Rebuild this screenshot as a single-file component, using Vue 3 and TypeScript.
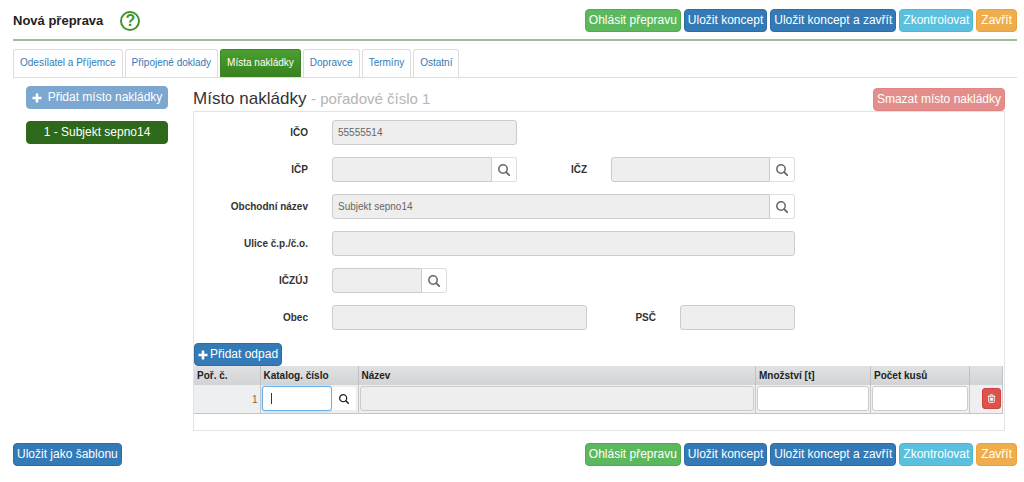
<script setup lang="ts">
import { ref } from 'vue'

interface Action { label: string; kind: string }

const actions: Action[] = [
  { label: 'Ohlásit přepravu', kind: 'success' },
  { label: 'Uložit koncept', kind: 'primary' },
  { label: 'Uložit koncept a zavřít', kind: 'primary' },
  { label: 'Zkontrolovat', kind: 'info' },
  { label: 'Zavřít', kind: 'warning' },
]
const tabs: string[] = ['Odesílatel a Příjemce', 'Připojené doklady', 'Místa nakládky', 'Dopravce', 'Termíny', 'Ostatní']
const activeTab = ref('Místa nakládky')
const ico = ref('55555514')
const companyName = ref('Subjekt sepno14')
const catalogNumber = ref('')
const quantity = ref('')
const pieces = ref('')
</script>

<template>
  <div class="page">
    <svg class="defs" aria-hidden="true">
      <symbol id="i-search" viewBox="0 0 12 12">
        <circle cx="5" cy="5" r="4.2" fill="none" stroke="currentColor" stroke-width="1.5" />
        <path d="M8.2 8.2l3 3" stroke="currentColor" stroke-width="1.8" stroke-linecap="round" />
      </symbol>
      <symbol id="i-plus" viewBox="0 0 10 10">
        <path d="M5 .5v9M.5 5h9" stroke="currentColor" stroke-width="2.6" />
      </symbol>
      <symbol id="i-trash" viewBox="0 0 10 10">
        <path d="M.8 2.5h8.4M3.2 2.3l.6-1.5h2.4l.6 1.5M1.9 2.7v5.7q0 .9.9.9h4.4q.9 0 .9-.9V2.7M3.9 4.2v3.4M5 4.2v3.4M6.1 4.2v3.4" fill="none" stroke="currentColor" stroke-width="1" />
      </symbol>
    </svg>

    <header class="top">
      <h1>Nová přeprava</h1>
      <button type="button" class="help" aria-label="Nápověda">?</button>
      <div class="actions">
        <button v-for="a in actions" :key="a.label" type="button" class="btn" :class="a.kind">{{ a.label }}</button>
      </div>
    </header>

    <nav class="tabs">
      <a v-for="t in tabs" :key="t" href="#" :class="{ active: t === activeTab }" @click.prevent="activeTab = t">{{ t }}</a>
    </nav>

    <div class="body">
      <aside class="side">
        <button type="button" class="btn add"><svg class="plus"><use href="#i-plus" /></svg>Přidat místo nakládky</button>
        <button type="button" class="btn place">1 - Subjekt sepno14</button>
      </aside>

      <main class="content">
        <div class="heading">
          <h2>Místo nakládky <small>- pořadové číslo 1</small></h2>
          <button type="button" class="btn remove">Smazat místo nakládky</button>
        </div>

        <section class="panel">
          <form class="form" @submit.prevent>
            <div class="row">
              <label for="ico">IČO</label>
              <input id="ico" class="field" :value="ico" readonly />
            </div>
            <div class="row">
              <label for="icp">IČP</label>
              <div class="group">
                <input id="icp" class="field" readonly />
                <button type="button" class="find" aria-label="Hledat IČP"><svg><use href="#i-search" /></svg></button>
              </div>
              <label for="icz">IČZ</label>
              <div class="group">
                <input id="icz" class="field" readonly />
                <button type="button" class="find" aria-label="Hledat IČZ"><svg><use href="#i-search" /></svg></button>
              </div>
            </div>
            <div class="row">
              <label for="company">Obchodní název</label>
              <div class="group wide">
                <input id="company" class="field" :value="companyName" readonly />
                <button type="button" class="find" aria-label="Hledat subjekt"><svg><use href="#i-search" /></svg></button>
              </div>
            </div>
            <div class="row">
              <label for="street">Ulice č.p./č.o.</label>
              <input id="street" class="field wide" readonly />
            </div>
            <div class="row">
              <label for="iczuj">IČZÚJ</label>
              <div class="group short">
                <input id="iczuj" class="field" readonly />
                <button type="button" class="find" aria-label="Hledat IČZÚJ"><svg><use href="#i-search" /></svg></button>
              </div>
            </div>
            <div class="row town">
              <label for="city">Obec</label>
              <input id="city" class="field" readonly />
              <label for="zip">PSČ</label>
              <input id="zip" class="field" readonly />
            </div>
          </form>

          <button type="button" class="btn primary waste"><svg class="plus"><use href="#i-plus" /></svg>Přidat odpad</button>
          <table>
            <colgroup><col class="c-no" /><col class="c-cat" /><col /><col class="c-qty" /><col class="c-pcs" /><col class="c-del" /></colgroup>
            <thead>
              <tr><th>Poř. č.</th><th>Katalog. číslo</th><th>Název</th><th>Množství [t]</th><th>Počet kusů</th><th></th></tr>
            </thead>
            <tbody>
              <tr>
                <td class="num">1</td>
                <td>
                  <div class="group catalog">
                    <input v-model="catalogNumber" class="field focused" aria-label="Katalog. číslo" />
                    <span v-if="!catalogNumber" class="caret"></span>
                    <button type="button" class="find" aria-label="Hledat katalogové číslo"><svg><use href="#i-search" /></svg></button>
                  </div>
                </td>
                <td><input class="field" readonly aria-label="Název" /></td>
                <td><input v-model="quantity" class="field" aria-label="Množství [t]" /></td>
                <td><input v-model="pieces" class="field" aria-label="Počet kusů" /></td>
                <td class="del"><button type="button" class="trash" aria-label="Smazat odpad"><svg><use href="#i-trash" /></svg></button></td>
              </tr>
            </tbody>
          </table>
        </section>
      </main>
    </div>

    <footer class="bottom">
      <button type="button" class="btn primary">Uložit jako šablonu</button>
      <div class="actions">
        <button v-for="a in actions" :key="a.label" type="button" class="btn" :class="a.kind">{{ a.label }}</button>
      </div>
    </footer>
  </div>
</template>

<style>
body { margin: 0; background: #fff; }
</style>

<style scoped>
.page { padding: 0 7px 16px 13px; font-family: "Liberation Sans", Arial, sans-serif; font-size: 10px; color: #333; }
.page * { box-sizing: border-box; }
.defs { position: absolute; width: 0; height: 0; }
button, input { font: inherit; margin: 0; }
button { cursor: pointer; }
svg { display: block; fill: none; }

.top { display: flex; align-items: center; padding: 9px 0 7px; border-bottom: 2px solid #9cc096; }
h1 { margin: 0 17px 0 0; padding-top: 1px; font-size: 13px; line-height: 22px; color: #222; }
.help { width: 20px; height: 20px; padding: 0; border: 2px solid #43932b; border-radius: 50%; background: #fff; color: #43932b; font-size: 16px; font-weight: bold; line-height: 16px; }
.actions { display: flex; gap: 3px; margin-left: auto; }

.btn { height: 23px; padding: 0 3px; border: 1px solid transparent; border-radius: 4px; color: #fff; font-size: 12px; line-height: 21px; white-space: nowrap; display: flex; align-items: center; justify-content: center; }
.success { background: #5cb85c; border-color: #4cae4c; }
.primary { background: #337ab7; border-color: #2e6da4; }
.info { background: #5bc0de; border-color: #46b8da; }
.warning { padding: 0 4px; background: #f0ad4e; border-color: #eea236; }
.plus { width: 10px; height: 10px; }

.tabs { display: flex; gap: 2px; margin-top: 8px; border-bottom: 1px solid #ddd; }
.tabs a { height: 28px; padding: 0 6px; border: 1px solid #ddd; border-bottom: 0; border-radius: 3px 3px 0 0; color: #337ab7; line-height: 26px; text-decoration: none; white-space: nowrap; }
.tabs a.active { border-color: #3b8524; background: linear-gradient(#4ba02f, #38801f); color: #fff; }

.body { display: grid; grid-template-columns: 180px minmax(0, 1fr); padding-right: 12px; }
.side { display: flex; flex-direction: column; gap: 12px; padding: 8px 25px 0 13px; }
.add { gap: 6px; background: #7ba7d0; border-color: #7ba7d0; }
.place { background: #2d681b; border-color: #2d681b; }
.heading { display: flex; justify-content: space-between; align-items: flex-start; padding-top: 10px; }
h2 { margin: 0; font-size: 17px; font-weight: normal; line-height: 22px; color: #333; }
h2 small { font-size: 15px; color: #b5b5b5; }
.remove { background: #e38e8c; border-color: #e18583; }

.panel { border: 1px solid #e3e3e3; padding-bottom: 16px; }
.form { display: grid; gap: 12px; padding: 8px 0 13px; }
.row { display: grid; grid-template-columns: 114fr 185fr 46fr 184fr 185fr; column-gap: 24px; align-items: center; }
.town { grid-template-columns: 114fr 255fr 45fr 115fr 185fr; }
.row label { font-weight: bold; text-align: right; line-height: 25px; white-space: nowrap; }
.wide { grid-column: 2 / 5; }
.short { width: 62%; }
.field { display: block; width: 100%; min-width: 0; height: 25px; padding: 0 5px; border: 1px solid #ccc; border-radius: 3px; background: #fff; color: #666; outline: none; }
.field[readonly] { background: #eee; }
.group { display: flex; min-width: 0; position: relative; }
.group .field { flex: 1; border-radius: 3px 0 0 3px; }
.find { display: flex; align-items: center; justify-content: center; flex: none; width: 25px; height: 25px; padding: 0; border: 1px solid #ddd; border-left: 0; border-radius: 0 3px 3px 0; background: #fff; color: #666; }
.find svg { width: 12px; height: 12px; }

.waste { gap: 2px; padding: 0 3px; }
table { width: calc(100% - 1px); table-layout: fixed; border-collapse: collapse; }
.c-no { width: 66px; }
.c-cat { width: 98px; }
.c-qty { width: 115px; }
.c-pcs { width: 99px; }
.c-del { width: 33px; }
th { height: 19px; padding: 0 3px; border-right: 1px solid #bfc1c4; background: linear-gradient(#e0e1e3, #d1d3d5); text-align: left; line-height: 18px; color: #222; white-space: nowrap; }
td { height: 28px; padding: 1px; border-right: 1px solid #c8c8c8; border-bottom: 1px solid #c4c4c4; background: #eeeff0; }
.num { padding: 2px 2px 0 0; text-align: right; color: #7b6b3d; }
.catalog .focused { border-color: #66afe9; border-radius: 3px; box-shadow: 0 0 3px #9ccbf0; }
.catalog .find { border-color: #eee; color: #222; }
.catalog .find svg { width: 10px; height: 10px; }
.caret { position: absolute; left: 9px; top: 7px; width: 1px; height: 11px; background: #333; }
.trash { display: flex; align-items: center; justify-content: center; width: 19px; height: 21px; margin-left: auto; padding: 0; border: 1px solid #d43f3a; border-radius: 3px; background: #d9534f; color: #fff; }
.trash svg { width: 9px; height: 9px; }

.bottom { display: flex; align-items: center; margin-top: 12px; }
</style>
